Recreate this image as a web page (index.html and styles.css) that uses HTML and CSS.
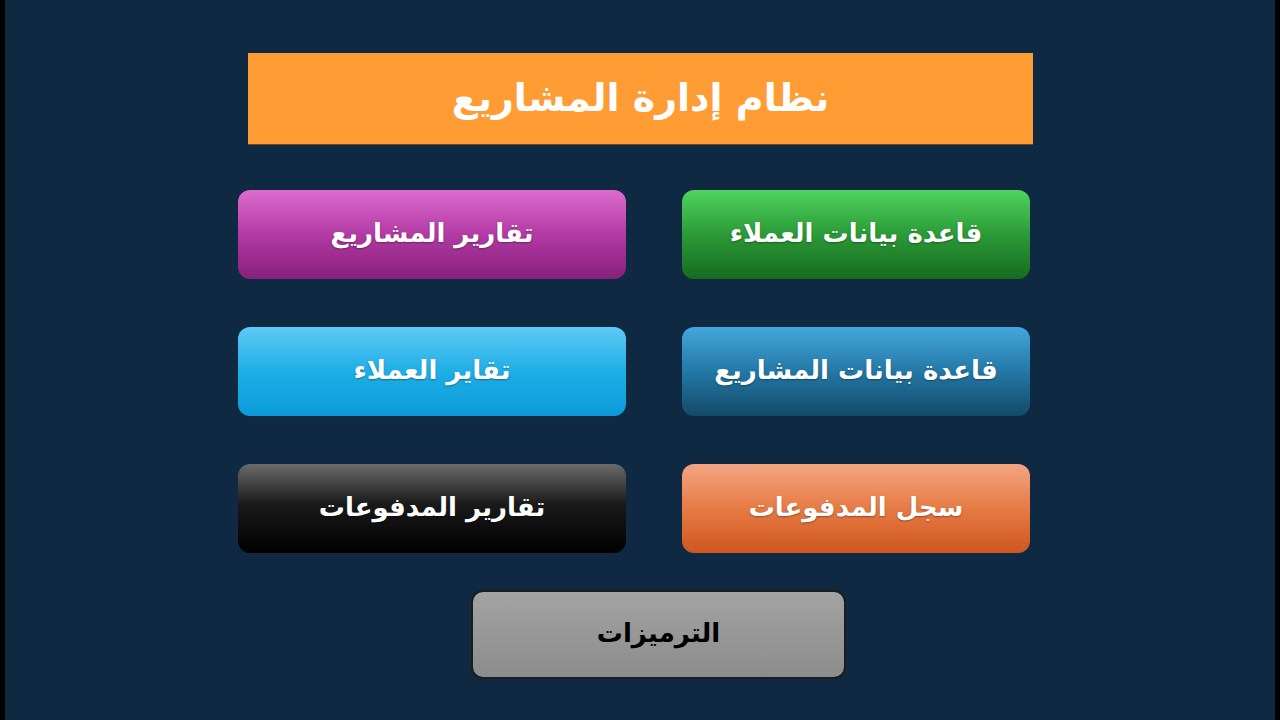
FILE: index.html
```html
<!DOCTYPE html>
<html lang="ar" dir="rtl">
<head>
<meta charset="utf-8">
<title>نظام إدارة المشاريع</title>
<link rel="stylesheet" href="styles.css">
</head>
<body>
<div class="screen">
  <header class="title-bar"><h1 class="title">نظام إدارة المشاريع</h1></header>
  <nav class="grid">
    <a class="btn btn-green">قاعدة بيانات العملاء</a>
    <a class="btn btn-purple">تقارير المشاريع</a>
    <a class="btn btn-navy">قاعدة بيانات المشاريع</a>
    <a class="btn btn-sky">تقاير العملاء</a>
    <a class="btn btn-orange">سجل المدفوعات</a>
    <a class="btn btn-black">تقارير المدفوعات</a>
  </nav>
  <div class="bottom">
    <a class="btn btn-gray">الترميزات</a>
  </div>
</div>
</body>
</html>
```
FILE: styles.css
```css
html, body {
  margin: 0;
  padding: 0;
  height: 100%;
  background: #000;
}
body {
  padding: 0 5px;
  box-sizing: border-box;
  font-family: "DejaVu Sans", sans-serif;
}
.screen {
  height: 720px;
  background: #0f2942;
  display: flex;
  flex-direction: column;
  align-items: flex-start;
  padding-top: 53px;
  box-sizing: border-box;
}
.title-bar {
  width: 785px;
  height: 91px;
  margin-right: 242px;
  background: #ff9c33;
  display: flex;
  align-items: center;
  justify-content: center;
  box-shadow: 0 1px 0 #6b4a22;
}
.title {
  margin: 0;
  color: #fff;
  font-size: 38px;
  font-weight: bold;
  line-height: 1;
  padding-bottom: 2px;
}
.grid {
  margin-top: 46px;
  margin-right: 245px;
  display: grid;
  grid-template-columns: 348px 388px;
  grid-auto-rows: 89px;
  column-gap: 56px;
  row-gap: 48px;
}
.bottom {
  margin-top: 37px;
  margin-right: 429px;
}
.btn {
  display: flex;
  align-items: center;
  justify-content: center;
  padding-bottom: 4px;
  border-radius: 12px;
  color: #fff;
  font-size: 26px;
  font-weight: bold;
  text-shadow: 0 1px 2px rgba(0,0,0,0.35);
  box-sizing: border-box;
  cursor: pointer;
}
.btn-green  { background: linear-gradient(#4fd35e, #2b9a37 50%, #176a1f); }
.btn-purple { background: linear-gradient(#dd6ccf, #b23aa4 50%, #86207a); }
.btn-navy   { background: linear-gradient(#44a7dc, #2378a6 50%, #134a68); }
.btn-sky    { background: linear-gradient(#5fcaf6, #1eaee6 50%, #0b9bd8); }
.btn-orange { background: linear-gradient(#f2a582, #e77b44 50%, #cf5620); }
.btn-black  { background: linear-gradient(#6a6a6a, #1a1a1a 45%, #000); }
.btn-gray {
  width: 375px;
  height: 89px;
  background: linear-gradient(#a3a3a3, #8c8c8c);
  border: 2px solid #1c1c1c;
  color: #000;
  font-size: 26px;
  text-shadow: none;
}
```
